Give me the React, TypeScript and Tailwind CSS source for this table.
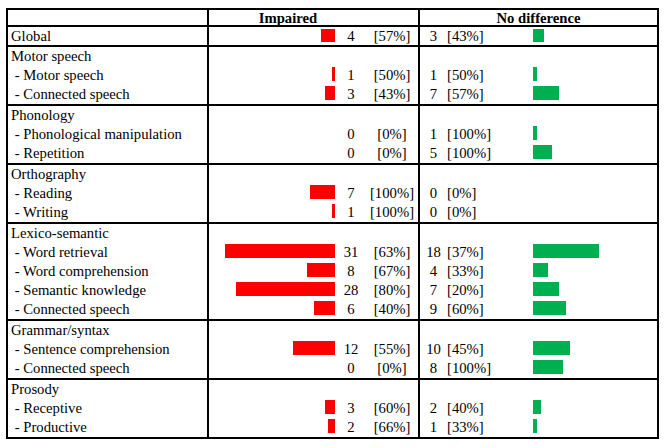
import React from "react";

type Item = { label: string; imp: number; impPct: string; nd: number; ndPct: string };
type Group = { title: string; items: Item[] };

const groups: Group[] = [
  {
    title: "Motor speech",
    items: [
      { label: " - Motor speech", imp: 1, impPct: "[50%]", nd: 1, ndPct: "[50%]" },
      { label: " - Connected speech", imp: 3, impPct: "[43%]", nd: 7, ndPct: "[57%]" },
    ],
  },
  {
    title: "Phonology",
    items: [
      { label: " - Phonological manipulation", imp: 0, impPct: "[0%]", nd: 1, ndPct: "[100%]" },
      { label: " - Repetition", imp: 0, impPct: "[0%]", nd: 5, ndPct: "[100%]" },
    ],
  },
  {
    title: "Orthography",
    items: [
      { label: " - Reading", imp: 7, impPct: "[100%]", nd: 0, ndPct: "[0%]" },
      { label: " - Writing", imp: 1, impPct: "[100%]", nd: 0, ndPct: "[0%]" },
    ],
  },
  {
    title: "Lexico-semantic",
    items: [
      { label: " - Word retrieval", imp: 31, impPct: "[63%]", nd: 18, ndPct: "[37%]" },
      { label: " - Word comprehension", imp: 8, impPct: "[67%]", nd: 4, ndPct: "[33%]" },
      { label: " - Semantic knowledge", imp: 28, impPct: "[80%]", nd: 7, ndPct: "[20%]" },
      { label: " - Connected speech", imp: 6, impPct: "[40%]", nd: 9, ndPct: "[60%]" },
    ],
  },
  {
    title: "Grammar/syntax",
    items: [
      { label: " - Sentence comprehension", imp: 12, impPct: "[55%]", nd: 10, ndPct: "[45%]" },
      { label: " - Connected speech", imp: 0, impPct: "[0%]", nd: 8, ndPct: "[100%]" },
    ],
  },
  {
    title: "Prosody",
    items: [
      { label: " - Receptive", imp: 3, impPct: "[60%]", nd: 2, ndPct: "[40%]" },
      { label: " - Productive", imp: 2, impPct: "[66%]", nd: 1, ndPct: "[33%]" },
    ],
  },
];

const redW = (n: number) => Math.round(n * 3.55 * 2) / 2;
const greenW = (n: number) => Math.round(n * 3.67 * 2) / 2;

function Line({ label, item, tall }: { label: string; item?: Item; tall?: boolean }) {
  const h = tall ? "h-[18px] leading-[18px]" : "h-[19px] leading-[19px]";
  return (
    <div className={`flex ${h}`}>
      <div className="w-[201px] border-r-2 border-black pl-[3px] whitespace-pre">{label}</div>
      <div className="w-[211px] border-r-2 border-black flex">
        <div className={`w-[126px] flex justify-end items-start ${tall ? "pt-[2px]" : "pt-[1px]"}`}>
          {item && item.imp > 0 ? (
            <div className={`bg-[#ff0000] ${tall ? "h-[13px]" : "h-[14px]"}`} style={{ width: redW(item.imp) }} />
          ) : null}
        </div>
        <div className="w-[32px] text-center">{item ? item.imp : ""}</div>
        <div className="w-[50px] text-center">{item ? item.impPct : ""}</div>
      </div>
      <div className="flex-1 flex">
        <div className="w-[27px] text-center">{item ? item.nd : ""}</div>
        <div className="w-[86px]">{item ? item.ndPct : ""}</div>
        <div className={`flex items-start ${tall ? "pt-[2px]" : "pt-[1px]"}`}>
          {item && item.nd > 0 ? (
            <div className={`bg-[#00b050] ${tall ? "h-[13px]" : "h-[14px]"}`} style={{ width: greenW(item.nd) }} />
          ) : null}
        </div>
      </div>
    </div>
  );
}

export default function App() {
  return (
    <div className="w-[665px] h-[448px] bg-white text-black overflow-hidden pt-[8px] pl-[6px] font-['Liberation_Serif','Tinos','Times_New_Roman','Nimbus_Roman','DejaVu_Serif',serif] text-[14.7px]">
      <div className="w-[653px] border-2 border-black">
        <div className="flex h-[17px] leading-[17px] border-b-2 border-black font-bold">
          <div className="w-[201px] border-r-2 border-black" />
          <div className="w-[211px] border-r-2 border-black">
            <div className="w-[158px] text-center">Impaired</div>
          </div>
          <div className="flex-1 text-center">No difference</div>
        </div>
        <div className="border-b-2 border-black">
          <Line label="Global" tall item={{ label: "", imp: 4, impPct: "[57%]", nd: 3, ndPct: "[43%]" }} />
        </div>
        {groups.map((g, gi) => (
          <div key={g.title} className={gi < groups.length - 1 ? "border-b-2 border-black" : ""}>
            <Line label={g.title} />
            {g.items.map((it, i) => (
              <Line key={i} label={it.label} item={it} />
            ))}
          </div>
        ))}
      </div>
    </div>
  );
}
